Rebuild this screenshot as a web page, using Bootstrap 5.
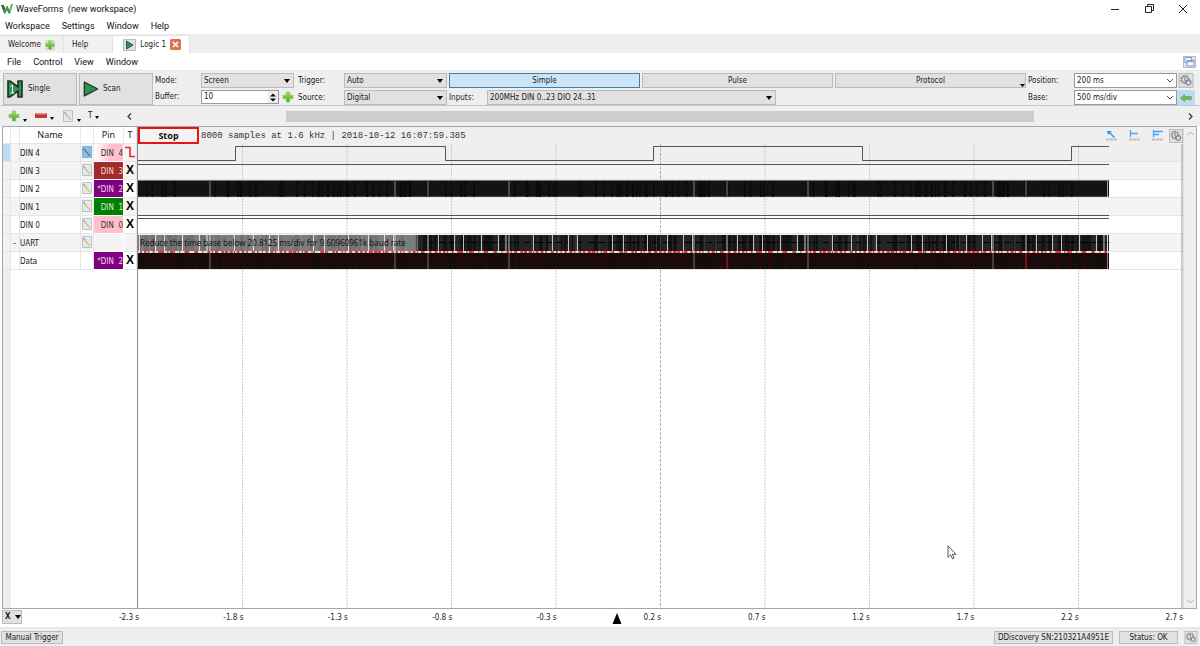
<!DOCTYPE html>
<html lang="en">
<head>
<meta charset="utf-8">
<meta name="viewport" content="width=device-width, initial-scale=1">
<title>WaveForms (new workspace)</title>
<link href="https://cdn.jsdelivr.net/npm/bootstrap@5.3.0/dist/css/bootstrap.min.css" rel="stylesheet">
<style>
body{font:9px/16px Roboto,"Noto Sans",sans-serif;color:#111;background:#fff}
svg{display:block;flex:none}
a{color:inherit;text-decoration:none}
button,select,input{color:inherit;font:inherit;padding:0;border-radius:0}
.tah{font:8px/14px "DejaVu Sans Condensed","DejaVu Sans",sans-serif;color:#222}
.chrome{background:#efefef}
.titlebar{height:17px;padding-left:1px;gap:3px}
.wbtn{width:34px;height:16px;border:0;background:none;display:flex;align-items:center;justify-content:center}
.menubar{height:17px;gap:12px;padding-left:5px;line-height:18px}
.menubar.inner{padding-left:7px}
.tabstrip{height:19px}
.tabstrip .tab-item{height:18px;border:0;border-right:1px solid #e2e2e2;border-top:1px solid #e2e2e2;margin-top:1px;background:#f0f0f0;padding:0 8px;display:flex;align-items:center;gap:4px}
.tabstrip .tab-item.active{background:#fff;padding-left:10px}
.box{border:1px solid #bbb;background:#e1e1e1}
.flat{border:0;background:none}
.toolbar{height:36px;padding:2px 5px 2px 3px;border-top:1px solid #e6e6e6;border-bottom:1px solid #c6c6c6;gap:2px}
.big{width:74px;height:32px;padding-left:3px;gap:4px}
.rows{display:flex;flex-direction:column;gap:2px}
.r{display:flex;align-items:center;height:15px}
.lab{width:46px}
.sel{appearance:none;width:103px;height:15px;padding:1px 0 0 2px;line-height:12px;background:#e1e1e1 url("data:image/svg+xml,%3Csvg xmlns='http://www.w3.org/2000/svg' width='10' height='6'%3E%3Cpath d='M1 1h6L4 5z'/%3E%3C/svg%3E") no-repeat right center}
.sel.short{width:93px}
.sel.half{width:50%}
.sel.open{background-color:#fff;border-color:#999;background-image:url("data:image/svg+xml,%3Csvg xmlns='http://www.w3.org/2000/svg' width='12' height='6'%3E%3Cpath d='M3 1l3 3 3-3' fill='none' stroke='%23555'/%3E%3C/svg%3E")}
.num{width:78px;height:14px;border:1px solid #999;background:#fff;display:flex}
.num input{border:0;width:66px;min-width:0;padding-left:2px;outline:0;background:none}
.num button{width:10px;height:12px;border:0;background:#eee;display:flex;align-items:center;justify-content:center}
.mode{flex:1 1 0;height:15px;line-height:14px}
.mode.active{background:#cce4f7;border-color:#3c7fb1}
.back{background:#bcdcf4;height:15px;width:18px;padding-left:3px}
.tools{height:20px;padding:0 3px}
.thumb{height:11px;background:#cdcdcd}
.frame{border:1px solid #a5a5ae;margin:0 3px 0 2px}
.side{width:135px;border-right:1px solid #888;background:linear-gradient(90deg,#efefef 8px,#fff 8px)}
.side table{border-collapse:separate;border-spacing:0;table-layout:fixed;width:134px}
.side td,.side th{height:18px;padding:0;border-right:1px solid #e6e6e6;border-bottom:1px solid #e6e6e6;overflow:hidden;white-space:nowrap;font-weight:400;vertical-align:top}
.side th{text-align:center;height:17px;font:9px/16px "Noto Sans",sans-serif;background:#fff}
.side tbody tr{background:#fff}
.side tbody tr.alt{background:#f4f4f4}
.side td:first-child{background:#f1f1f1}
.side tr.cur td:first-child{background:#b9dcf4}
.side td.pin{text-align:right;border-color:#fff}
.side td.x{font:bold 12px/17px "Liberation Sans",sans-serif;color:#000;text-align:center}
.bgrows{height:126px;top:17px;background:linear-gradient(#efefef 17px,#e4e4e4 17px 18px,#f4f4f4 18px 35px,#e4e4e4 35px 36px,#fff 36px 53px,#e4e4e4 53px 54px,#f4f4f4 54px 71px,#e4e4e4 71px 72px,#fff 72px 89px,#e4e4e4 89px 90px,#f4f4f4 90px 107px,#e4e4e4 107px 108px,#fff 108px 125px,#e4e4e4 125px)}
.cell{height:17px;line-height:19px;overflow:hidden}
.head{height:17px;background:#efefef}
.stop{width:61px;height:17px;border:2px solid #e11;background:#f3f3f3;font:bold 9px/12px "Noto Sans",sans-serif;text-align:center;color:#111}
.mono{font:9px/19px "Liberation Mono",monospace;color:#333;padding-left:2px}
.grid{top:17px;bottom:0;height:calc(100% - 17px)}
.waves{top:17px;height:126px}
.note{top:108px;left:0;height:16px;font:8px/16px "Noto Sans",sans-serif;padding-left:2px;white-space:nowrap;color:#111}
.vscroll{width:13px;background:#efefef;border-left:1px solid #ddd}
.axis{height:18px;padding-right:17px}
.axis span{flex:1 1 0;text-align:right;line-height:18px}
.axis span.first{flex:none;width:117px}
.xbtn{width:20px;height:14px;margin:1px 0 0 2px;gap:4px;padding-left:2px}
.trig{left:612px;top:4px}
.statusbar{height:19px;padding:2px 2px 2px 1px;border-top:2px solid #e8e8e8;gap:6px}
.statusbar button{height:13px;line-height:12px}
.cursor{left:809px;top:418px}
</style>
</head>
<body class="d-flex flex-column min-vh-100">
<svg width="0" height="0" class="position-absolute" aria-hidden="true">
  <defs>
    <linearGradient id="gg" x1="0" y1="0" x2="0" y2="1"><stop offset="0" stop-color="#a5dd6c"/><stop offset="1" stop-color="#4ba52c"/></linearGradient>
    <symbol id="plus" viewBox="0 0 12 12"><path d="M4.300 1h3.400v3.300H11v3.400H7.700V11H4.300V7.700H1V4.300h3.300z" fill="url(#gg)" stroke="#7cc65a" stroke-width=".6"/></symbol>
    <symbol id="play" viewBox="0 0 18 18"><path d="M1.500 1.200L16.500 9 1.500 16.800z" fill="#2f9450" stroke="#223a2a" stroke-width="1.500" stroke-linejoin="round"/></symbol>
    <symbol id="pen" viewBox="0 0 10 12"><path d="M.5.5h9v11h-9z" fill="#e4e9ee" stroke="#b9c2cd"/><path d="M2 3l6 7" stroke="#d6c377" stroke-width="1.400"/><path d="M1.500 2l1.500 2" stroke="#999" stroke-width="1.200"/></symbol>
    <symbol id="pensel" viewBox="0 0 10 12"><path d="M.5.5h9v11h-9z" fill="#8ebbe2" stroke="#7fb0d8"/><path d="M1.500 2.500l6.500 7.500" stroke="#4d7f9e" stroke-width="1.200"/></symbol>
    <symbol id="gear" viewBox="0 0 14 14"><rect x=".5" y=".5" width="13" height="13" fill="#e1e1e1" stroke="#bbb"/><circle cx="6" cy="6" r="3.600" fill="none" stroke="#858c92" stroke-width="1.600" stroke-dasharray="1.600 .7"/><circle cx="6" cy="6" r="2.600" fill="#e8ebee" stroke="#8d949a" stroke-width=".8"/><circle cx="9.300" cy="9" r="2.200" fill="#dde1e4" stroke="#6d757c" stroke-width="1.400" stroke-dasharray="1.300 .5"/><path d="M6 4v3l1.500 1" stroke="#6d757c" fill="none"/></symbol>
  </defs>
</svg>

<header class="titlebar d-flex align-items-center">
  <svg width="12" height="10" viewBox="0 0 12 10"><path d="M0 1h2.600l1.600 4.500L5.600 2h1.200l1.500 4L10.300 0H12L9 9.500H7.400L6 6 4.500 9.500H3z" fill="#3c9a4b"/><path d="M0 1h2.600l1.600 3.500L3 7z" fill="#4a554d"/><path d="M8.300 6l2-6H12L9.200 8z" fill="#70c04c"/></svg>
  <span>WaveForms&nbsp; (new workspace)</span>
  <div class="ms-auto d-flex">
    <button class="wbtn" aria-label="Minimize"><svg width="8" height="8"><path d="M0 4.500h8" stroke="#222"/></svg></button>
    <button class="wbtn" aria-label="Restore"><svg width="9" height="9" fill="none" stroke="#222"><path d="M.5 2.500h6v6h-6zM2.500 2.500v-2h6v6h-2"/></svg></button>
    <button class="wbtn" aria-label="Close"><svg width="8" height="8"><path d="M0 0l8 8M8 0L0 8" stroke="#222"/></svg></button>
  </div>
</header>
<nav class="menubar d-flex" aria-label="Workspace"><a href="#">Workspace</a><a href="#">Settings</a><a href="#">Window</a><a href="#">Help</a></nav>

<div class="tabstrip chrome tah d-flex" role="tablist">
  <button class="tab-item" role="tab">Welcome <svg width="10" height="10" viewBox="0 0 12 12"><rect width="12" height="12" fill="#d5dcd0"/><use href="#plus"/></svg></button>
  <button class="tab-item pe-4" role="tab">Help</button>
  <button class="tab-item active" role="tab"><svg width="13" height="12" viewBox="0 0 13 12"><path d="M.5.5h12v11H.5z" fill="#e1e1e1" stroke="#bbb"/><path d="M3.500 2l6.500 4-6.500 4z" fill="#2f9450" stroke="#223a2a" stroke-width=".8"/></svg>Logic 1<svg width="11" height="11" viewBox="0 0 11 11"><rect width="11" height="11" rx="1.500" fill="#e2704f"/><path d="M3 3l5 5M8 3L3 8" stroke="#fff" stroke-width="1.700"/></svg></button>
</div>
<nav class="menubar inner d-flex align-items-center" aria-label="Instrument"><a href="#">File</a><a href="#">Control</a><a href="#">View</a><a href="#">Window</a>
  <button class="box ms-auto me-1 d-flex" aria-label="Undock"><svg width="11" height="10" viewBox="0 0 11 10" fill="#eef4fd" stroke="#7d9fd8"><path d="M1 .5h6.500v5H1z"/><path d="M3 3.500h7v5.500H3zM3 4.500h7"/></svg></button>
</nav>

<section class="toolbar chrome tah d-flex">
  <button class="box big d-flex align-items-center"><svg width="17" height="20" viewBox="0 0 17 20"><path d="M1 2h2l8 6V2h4v16h-4v-6l-8 6H1z" fill="#2f9450" stroke="#1d2e23" stroke-width="1.600"/><path d="M3.500 7.500L5.500 6v8M3.500 14h4" stroke="#fff" fill="none"/></svg>Single</button>
  <button class="box big d-flex align-items-center"><svg width="16" height="18"><use href="#play"/></svg>Scan</button>
  <div class="rows">
    <div class="r"><label class="lab" for="mode">Mode:</label><select id="mode" class="box sel short"><option>Screen</option></select></div>
    <div class="r"><label class="lab" for="buf">Buffer:</label><div class="num"><input id="buf" value="10"><button aria-label="Step"><svg width="6" height="9"><path d="M0 3.500h6L3 .5zM0 5.500h6l-3 3z"/></svg></button></div><button class="flat" style="padding-left:3px" aria-label="Add buffer"><svg width="12" height="12"><use href="#plus"/></svg></button></div>
  </div>
  <div class="rows" style="margin-left:2px">
    <div class="r"><label class="lab" for="trg">Trigger:</label><select id="trg" class="box sel"><option>Auto</option></select></div>
    <div class="r"><label class="lab" for="src">Source:</label><select id="src" class="box sel"><option>Digital</option></select></div>
  </div>
  <div class="rows flex-grow-1">
    <div class="r" style="gap:2px"><button class="box mode active">Simple</button><button class="box mode">Pulse</button><button class="box mode position-relative">Protocol<svg width="5" height="3" class="position-absolute bottom-0 end-0"><path d="M0 0h5L2.500 3z"/></svg></button></div>
    <div class="r"><label for="inp" style="width:38px">Inputs:</label><select id="inp" class="box sel half"><option>200MHz DIN 0..23 DIO 24..31</option></select></div>
  </div>
  <div class="rows">
    <div class="r"><label class="lab" for="pos">Position:</label><select id="pos" class="box sel open"><option>200 ms</option></select><button class="flat" aria-label="Options"><svg width="18" height="15"><use href="#gear"/></svg></button></div>
    <div class="r"><label class="lab" for="base">Base:</label><select id="base" class="box sel open"><option>500 ms/div</option></select><button class="flat back" aria-label="Back"><svg width="12" height="8"><path d="M.5 4l4-3.500V2.500h7v3h-7v2z" fill="#6fbb5d" stroke="#5a9c52" stroke-width=".6"/></svg></button></div>
  </div>
</section>

<div class="tools chrome tah d-flex align-items-center">
  <div class="d-flex align-items-center" style="width:124px">
    <button class="flat d-flex align-items-end" style="width:27px;padding-left:5px;gap:3px" aria-label="Add"><svg width="12" height="12"><use href="#plus"/></svg><svg width="4" height="3"><path d="M0 0h4L2 3z"/></svg></button>
    <button class="flat d-flex align-items-end" style="width:27px;padding-left:5px;gap:3px" aria-label="Remove"><svg width="12" height="8"><rect y="1" width="12" height="5" rx="1" fill="#c33636"/><rect x="1" y="1" width="10" height="1.500" fill="#ee8c8c"/></svg><svg width="4" height="3"><path d="M0 0h4L2 3z"/></svg></button>
    <button class="flat d-flex align-items-end" style="width:27px;padding-left:6px;gap:4px" aria-label="Edit"><svg width="10" height="12"><use href="#pen"/></svg><svg width="4" height="3"><path d="M0 0h4L2 3z"/></svg></button>
    <button class="flat d-flex align-items-center" style="padding-left:4px;gap:3px">T<svg width="4" height="6"><path d="M0 3h4L2 6z"/></svg></button>
  </div>
  <button class="flat" aria-label="Scroll left"><svg width="5" height="7"><path d="M4 0.500L1 3.500l3 3" fill="none" stroke="#333" stroke-width="1.200"/></svg></button>
  <div class="flex-grow-1 px-2"><div class="thumb" style="width:72%;margin-left:14%"></div></div>
  <button class="flat me-1" aria-label="Scroll right"><svg width="5" height="7"><path d="M1 0.500l3 3-3 3" fill="none" stroke="#333" stroke-width="1.200"/></svg></button>
</div>

<main class="frame tah d-flex flex-grow-1">
  <div class="side flex-shrink-0">
    <table>
      <colgroup><col style="width:8px"><col style="width:9px"><col style="width:61px"><col style="width:13px"><col style="width:30px"><col style="width:13px"></colgroup>
      <thead><tr><th></th><th></th><th>Name</th><th></th><th>Pin</th><th>T</th></tr></thead>
      <tbody id="chan"></tbody>
    </table>
  </div>
  <div class="position-relative flex-grow-1 overflow-hidden">
    <div class="bgrows position-absolute start-0 w-100"></div>
    <svg class="grid position-absolute start-0 w-100" id="grid"></svg>
    <svg class="waves position-absolute start-0 w-100" id="waves" viewBox="0 0 1045 126" preserveAspectRatio="none"></svg>
    <div class="note position-absolute">Reduce the time base below 20.8125 ms/div for 9.60960961k baud rate</div>
    <div class="head d-flex position-relative">
      <button class="stop">Stop</button><span class="mono">8000 samples at 1.6 kHz | 2018-10-12 16:07:59.385</span>
      <div class="ms-auto d-flex align-items-center" style="gap:12px">
        <svg width="11" height="11"><path d="M0 9.500h11" stroke="#bbb" stroke-width="2" stroke-dasharray="2 .5"/><path d="M1 1h5L4.500 2.500 9 7 8 8 3.500 3.500 2 5z" fill="#3794f2"/></svg>
        <svg width="11" height="11"><path d="M0 9.500h11" stroke="#bbb" stroke-width="2" stroke-dasharray="2 .5"/><path d="M1.500 0v7M1 3.500h8" stroke="#46a4fa" stroke-width="1.300"/></svg>
        <svg width="11" height="11"><path d="M0 9.500h11" stroke="#bbb" stroke-width="2" stroke-dasharray="2 .5"/><path d="M1.500 0v7M1 1.500h10M1 4.500h6" stroke="#46a4fa" stroke-width="1.300"/></svg>
        <button class="flat" style="margin-left:-6px" aria-label="Plot options"><svg width="14" height="14"><use href="#gear"/></svg></button>
      </div>
    </div>
    <svg class="cursor position-absolute" width="10" height="15"><path d="M1 .8v11.500l2.700-2.500 1.700 4 1.700-.8-1.700-3.700H9z" fill="#fff" stroke="#445" stroke-width=".9"/></svg>
  </div>
  <div class="vscroll d-flex flex-column justify-content-between align-items-center py-1">
    <svg width="7" height="5"><path d="M.5 4l3-3 3 3" fill="none" stroke="#aaa"/></svg>
    <svg width="7" height="5"><path d="M.5 1l3 3 3-3" fill="none" stroke="#aaa"/></svg>
  </div>
</main>

<div class="axis tah d-flex position-relative">
  <button class="box xbtn d-flex align-items-center"><b>X</b><svg width="6" height="4"><path d="M0 0h6L3 4z"/></svg></button>
  <span class="first">-2.3 s</span><span>-1.8 s</span><span>-1.3 s</span><span>-0.8 s</span><span>-0.3 s</span><span>0.2 s</span><span>0.7 s</span><span>1.2 s</span><span>1.7 s</span><span>2.2 s</span><span>2.7 s</span>
  <svg class="trig position-absolute" width="10" height="11"><path d="M5 0l4.500 11h-9z"/></svg>
</div>
<footer class="statusbar chrome tah d-flex align-items-center">
  <button class="box" style="width:62px">Manual Trigger</button>
  <button class="box ms-auto" style="width:119px">DDiscovery SN:210321A4951E</button>
  <button class="box" style="width:59px">Status: OK</button>
  <button class="flat" aria-label="Device options"><svg width="14" height="13"><use href="#gear"/></svg></button>
</footer>

<script src="https://cdn.jsdelivr.net/npm/bootstrap@5.3.0/dist/js/bootstrap.bundle.min.js"></script>
<script>
// channel list: name, pin label, pin background, pin text colour, row class
const channels = [
  ['DIN 4','DIN&nbsp; 4','linear-gradient(90deg,#fff,#ffc0cb 60%)','#333','alt cur'],
  ['DIN 3','DIN&nbsp; 3','#a52a2a','#f3dede','alt'],
  ['DIN 2','*DIN&nbsp; 2','#800080','#eed8ee',''],
  ['DIN 1','DIN&nbsp; 1','#008000','#d8eed8','alt'],
  ['DIN 0','DIN&nbsp; 0','#ffc0cb','#333',''],
  ['UART','','','','alt'],
  ['Data','*DIN&nbsp; 2','#800080','#eed8ee','']
];
document.getElementById('chan').innerHTML = channels.map((c, i) => {
  const cell = t => `<div class="cell">${t}</div>`;
  const edit = c[0] === 'Data' ? '' : `<svg width="10" height="12" class="mx-auto" style="margin-top:2px"><use href="#${i ? 'pen' : 'pensel'}"/></svg>`;
  const trig = i === 0 ? '<svg width="12" height="14"><path d="M1 3.500h5v9h5" fill="none" stroke="#e22" stroke-width="1.600"/></svg>' : (c[1] ? 'X' : '');
  return `<tr class="${c[4]}"><td></td><td>${cell(c[0] === 'UART' ? '&nbsp;-' : '')}</td><td>${cell(c[0])}</td><td>${edit}</td><td class="pin" style="background:${c[2]};color:${c[3]}">${cell(c[1])}</td><td class="x">${trig}</td></tr>`;
}).join('');

// time grid, one division every tenth of the plot
let g = '';
for (let i = 1; i <= 10; i++) {
  const x = i === 10 ? 99.9 : i * 10;
  g += `<line x1="${x}%" x2="${x}%" y1="0" y2="100%" stroke="${i === 10 ? '#999' : i === 5 ? '#aaa' : '#ccc'}" stroke-dasharray="${i === 10 ? '' : i === 5 ? '3 1.5' : '2 1'}"/>`;
}
document.getElementById('grid').innerHTML = g;

// digital traces; the UART traffic repeats every 299 units
const END = 971, PERIOD = 299, T0 = 289.5;
let seed = 7;
const rnd = () => (seed = seed * 16807 % 2147483647) / 2147483647;
const rect = (x, y, w, h, f) => `<rect x="${x}" y="${y}" width="${w}" height="${h}" fill="${f}"/>`;
const repeat = (off, fn) => { let s = ''; for (let x = T0 + off - PERIOD * 2; x < END; x += PERIOD) if (x >= 0 && x < END - 4) s += fn(x); return s; };
const line = d => `<path d="${d}" fill="none" stroke="#555" vector-effect="non-scaling-stroke"/>`;
let w = line('M0 16.500H97.500V2.500H307.500V16.500H515.500V2.500H724.500V16.500H933.500V2.500H971') +
  line('M0 20.500H971') + line('M0 71.500H971') + line('M0 74.500H971') +
  rect(0, 37, END, 16, '#131313') + rect(0, 36, END, 1, '#777') + rect(0, 52, END, 1, '#444') +
  rect(0, 91, END, 16, '#242424') + rect(0, 91, 280, 16, '#7d7d7d') +
  rect(0, 109, END, 16, '#110d0d') + rect(0, 107, END, 2, '#e8e0e0');
for (let i = 0; i < 46; i++) { const o = rnd() * PERIOD, k = 1 + rnd(); w += repeat(o, x => rect(x, 37, k, 16, '#0a0a0a')); }
for (let i = 0; i < 80; i++) { const o = rnd() * PERIOD, k = 1 + rnd() * 2; w += repeat(o, x => rect(x, 91, k, 16, x < 278 ? '#707070' : '#121212')); }
for (let i = 0; i < 16; i++) { const o = rnd() * PERIOD; w += repeat(o, x => rect(x, 91, 1, 16, x < 278 ? '#8c8c8c' : '#3c3c3c')); }
for (let i = 0; i < 28; i++) { const o = i * 10.7, k = 3 + rnd() * 6; w += repeat(o, x => x > 280 ? rect(x, 98, k, 1, '#000') : ''); }
for (let i = 0; i < 66; i++) { const o = i * 4.5 + rnd() * 3, k = 1 + rnd() * 3;
  w += repeat(o, x => rect(x, 107, k, 2, '#f03030') + rect(x, 111, k, 3, '#2a0606') + rect(x, 116, k, 3, '#2a0606') + rect(x, 122, k, 2, '#3a0808')); }
for (const o of [0, 10.5, 26.5, 35.5, 53.5, 70.5, 78, 81, 105.5, 124.5, 140.5, 149.5, 184.5, 195.5, 219.5, 239.5, 255.5, 264.5, 266])
  w += repeat(o, x => rect(x, 91, 1, 16, x < 278 ? '#ddd' : '#c0c0c0'));
for (const o of [81, 266, 299])
  w += repeat(o, x => rect(x, 37, 1, 16, '#808080') + rect(x, 109, 1, 16, o === 299 && x > 300 ? '#e01818' : '#707070'));
w += rect(969, 37, 1, 16, '#aaa') + rect(969, 91, 1, 16, '#ddd') + rect(969, 109, 1, 16, '#888');
document.getElementById('waves').innerHTML = w;
</script>
</body>
</html>
